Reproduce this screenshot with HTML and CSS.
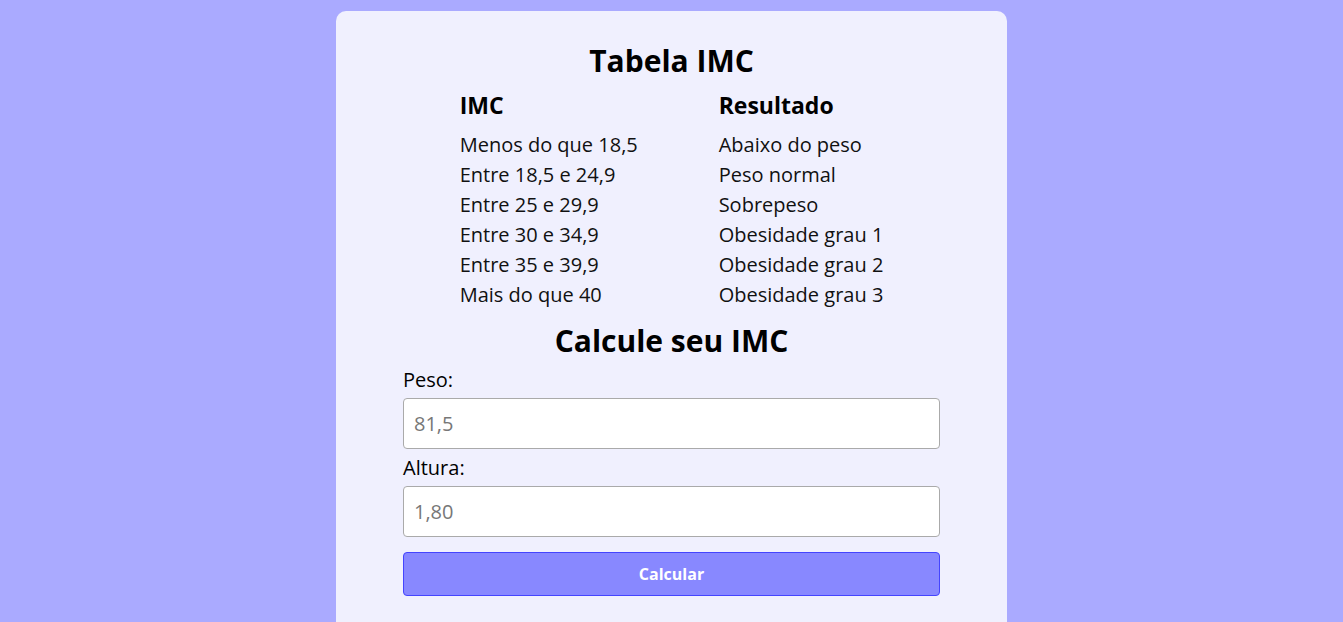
FILE: index.html
```html
<!DOCTYPE html>
<html lang="pt-BR">
<head>
<meta charset="utf-8">
<title>Calculadora IMC</title>
<link rel="stylesheet" href="styles.css">
</head>
<body>
<main class="card">
  <h1 class="title">Tabela IMC</h1>
  <div class="table">
    <div class="th">IMC</div><div class="th">Resultado</div>
    <div class="td">Menos do que 18,5</div><div class="td">Abaixo do peso</div>
    <div class="td">Entre 18,5 e 24,9</div><div class="td">Peso normal</div>
    <div class="td">Entre 25 e 29,9</div><div class="td">Sobrepeso</div>
    <div class="td">Entre 30 e 34,9</div><div class="td">Obesidade grau 1</div>
    <div class="td">Entre 35 e 39,9</div><div class="td">Obesidade grau 2</div>
    <div class="td">Mais do que 40</div><div class="td">Obesidade grau 3</div>
  </div>
  <h2 class="title title2">Calcule seu IMC</h2>
  <form class="form">
    <label class="label" for="peso">Peso:</label>
    <input class="input" id="peso" type="text" placeholder="81,5">
    <label class="label" for="altura">Altura:</label>
    <input class="input" id="altura" type="text" placeholder="1,80">
    <button class="button" type="button">Calcular</button>
  </form>
</main>
</body>
</html>
```

FILE: styles.css
```css
* { box-sizing: border-box; }
html, body { height: 100%; }
body {
  margin: 0;
  background: #aaaaff;
  font-family: "Open Sans", "DejaVu Sans", sans-serif;
  color: #000;
}
.card {
  width: 671px;
  min-height: calc(100% - 11px);
  margin: 11px auto 0;
  background: #f0f0fe;
  border-radius: 10px 10px 0 0;
  padding: 35px 67px 20px;
}
.title {
  margin: 0;
  text-align: center;
  font-size: 30px;
  font-weight: 700;
  line-height: 30px;
}
.table {
  display: grid;
  grid-template-columns: 259px auto;
  justify-content: center;
  margin-top: 14px;
}
.th {
  font-size: 23px;
  font-weight: 700;
  line-height: 30px;
  margin-bottom: 10px;
}
.td {
  font-size: 20px;
  line-height: 30px;
  color: #111;
}
.title2 { margin-top: 16px; }
.form {
  display: flex;
  flex-direction: column;
  margin-top: 9px;
}
.label {
  font-size: 20px;
  line-height: 30px;
  margin-bottom: 3px;
}
.input {
  height: 51px;
  border: 1px solid #aaa;
  border-radius: 4px;
  background: #fff;
  padding: 0 10px;
  font-family: inherit;
  font-size: 20px;
  margin-bottom: 4px;
  outline: none;
}
.input::placeholder { color: #777; }
.button {
  margin-top: 11px;
  height: 44px;
  background: #8888ff;
  border: 1px solid #4444ff;
  border-radius: 4px;
  color: #fff;
  font-family: inherit;
  font-size: 16px;
  font-weight: 700;
}
```
